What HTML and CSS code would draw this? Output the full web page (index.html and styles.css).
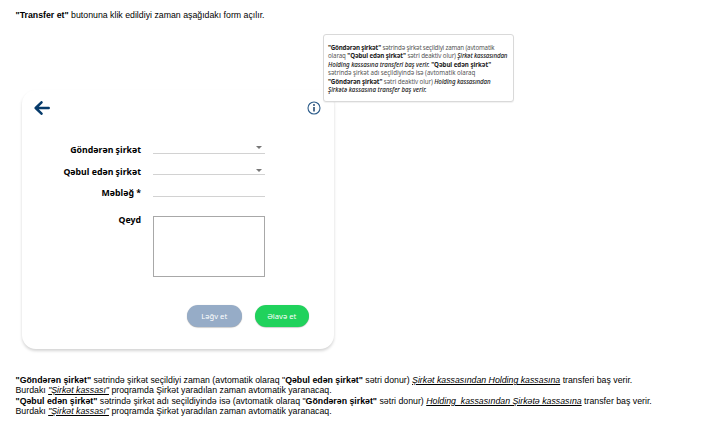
FILE: index.html
```html
<!DOCTYPE html>
<html lang="az">
<head>
<meta charset="utf-8">
<title>Transfer</title>
<link rel="stylesheet" href="styles.css">
</head>
<body>
<main class="page">
  <p class="intro"><b>"Transfer et"</b> butonuna klik edildiyi zaman aşağıdakı form açılır.</p>
  <section class="card">
    <header class="card-head">
      <svg class="back" viewBox="0 0 16 14"><path d="M7.5 1.3 1.7 7l5.8 5.7M2 7h12.7" fill="none" stroke="#073b6b" stroke-width="2.5" stroke-linecap="round" stroke-linejoin="round"/></svg>
      <svg class="info" viewBox="0 0 14 14"><circle cx="7" cy="7" r="6" fill="#fff" stroke="#2d5d8b" stroke-width="1.1"/><path d="M7 6v4.5" stroke="#173f69" stroke-width="1.5"/><circle cx="7" cy="4" r=".9" fill="#173f69"/></svg>
      <aside class="tip">
        <div class="t1"><b>"Göndərən şirkət"</b> sətrində şirkət seçildiyi zaman (avtomatik</div>
        <div class="t2">olaraq <b>"Qəbul edən şirkət"</b> sətri deaktiv olur) <em>Şirkət kassasından</em></div>
        <div class="t3"><em>Holding kassasına transferi baş verir.</em> <b>"Qəbul edən şirkət"</b></div>
        <div class="t4">sətrində şirkət adı seçildiyində isə (avtomatik olaraq</div>
        <div class="t5"><b>"Göndərən şirkət"</b> sətri deaktiv olur) <em>Holding kassasından</em></div>
        <div class="t6"><em>Şirkətə kassasına transfer baş verir.</em></div>
      </aside>
    </header>
    <form class="form">
      <label>Göndərən şirkət</label><div class="field"><i class="caret"></i></div>
      <label class="receiver">Qəbul edən şirkət</label><div class="field"><i class="caret low"></i></div>
      <label>Məbləğ *</label><div class="field"></div>
      <label class="note">Qeyd</label><div class="area"></div>
    </form>
    <footer class="actions">
      <button class="btn cancel">Ləğv et</button>
      <button class="btn add">Əlavə et</button>
    </footer>
  </section>
  <section class="notes">
    <p><b>"Göndərən şirkət"</b> sətrində şirkət seçildiyi zaman (avtomatik olaraq "<b>Qəbul edən şirkət"</b> sətri donur) <u>Şirkət kassasından Holding kassasına</u> transferi baş verir.</p>
    <p>Burdakı <u>"Şirkət kassası"</u> proqramda Şirkət yaradılan zaman avtomatik yaranacaq.</p>
    <p><b>"Qəbul edən şirkət"</b> sətrində şirkət adı seçildiyində isə (avtomatik olaraq "<b>Göndərən şirkət"</b> sətri donur) <u>Holding&nbsp; kassasından Şirkətə kassasına</u> transfer baş verir.</p>
    <p>Burdakı <u>"Şirkət kassası"</u> proqramda Şirkət yaradılan zaman avtomatik yaranacaq.</p>
  </section>
</main>
</body>
</html>
```
FILE: styles.css
```css
* { box-sizing: border-box; }
body { margin: 0; background: #fff; color: #000; }
.page {
  width: 702px; height: 424px; overflow: hidden;
  padding: 10px 0 0 15.5px;
  font: 8.78px/10.3px "Liberation Sans", Arial, sans-serif;
}
p { margin: 0; white-space: pre; }
.intro { height: 11px; line-height: 11px; }
.card {
  width: 312px; height: 259px; margin: 69px 0 0 6.5px;
  border-radius: 14px; background: #fff;
  box-shadow: 0 2px 3px rgba(0, 0, 0, .17);
  font-family: "Noto Sans", sans-serif;
}
.card-head {
  position: relative; display: flex; justify-content: space-between; align-items: center;
  height: 36px; padding: 0 13px 0 12px;
}
.back { width: 16px; height: 14px; }
.info { width: 14px; height: 14px; }
.tip {
  position: absolute; left: 301px; top: -56px; width: 191px; height: 68px;
  padding: 9px 0 0 4px; border: 1px solid #d9d9d9; border-radius: 3px;
  background: #fff; box-shadow: 0 1px 1px rgba(0, 0, 0, .06);
  color: #555; font-size: 6.2px; line-height: 8.4px; white-space: nowrap;
}
.tip b { color: #222; font-weight: 700; }
.tip em { color: #222; font-weight: 500; }
.t1 { letter-spacing: -.18px; }
.t2 { letter-spacing: -.12px; }
.t3 { letter-spacing: -.05px; }
.t4 { letter-spacing: -.05px; }
.t5 { letter-spacing: -.1px; }
.t6 { letter-spacing: -.01px; }
.form {
  display: grid; grid-template-columns: 119px 112px; column-gap: 12px;
  grid-template-rows: 28px 21px 22px 80px;
}
.form label {
  justify-self: end; align-self: end; height: 10px; line-height: 12px;
  font-size: 8.75px; font-weight: 700; white-space: nowrap;
}
.form .receiver { height: 9px; }
.form .note { align-self: start; margin-top: 17px; }
.field { position: relative; border-bottom: 1px solid #d2d2d2; }
.caret {
  position: absolute; right: 3px; bottom: 4px;
  border: 2.5px solid transparent; border-top: 3px solid #777; border-bottom: 0;
  border-left-width: 3px; border-right-width: 3px;
}
.low { bottom: 2px; }
.area { height: 61px; margin-top: 19px; border: 1px solid #a8a8a8; }
.actions { display: flex; gap: 13px; padding: 28px 0 0 165px; }
.btn {
  width: 54.5px; height: 22px; padding: 0; border: 0; border-radius: 11px;
  color: #fff; font: 7.6px/20px "Noto Sans", sans-serif;
  box-shadow: 0 .5px 1px rgba(0, 0, 0, .35);
}
.cancel { background: #96acc7; }
.add { background: #20d25c; }
.notes { margin-top: 26px; }
.notes u { font-style: italic; }
```
